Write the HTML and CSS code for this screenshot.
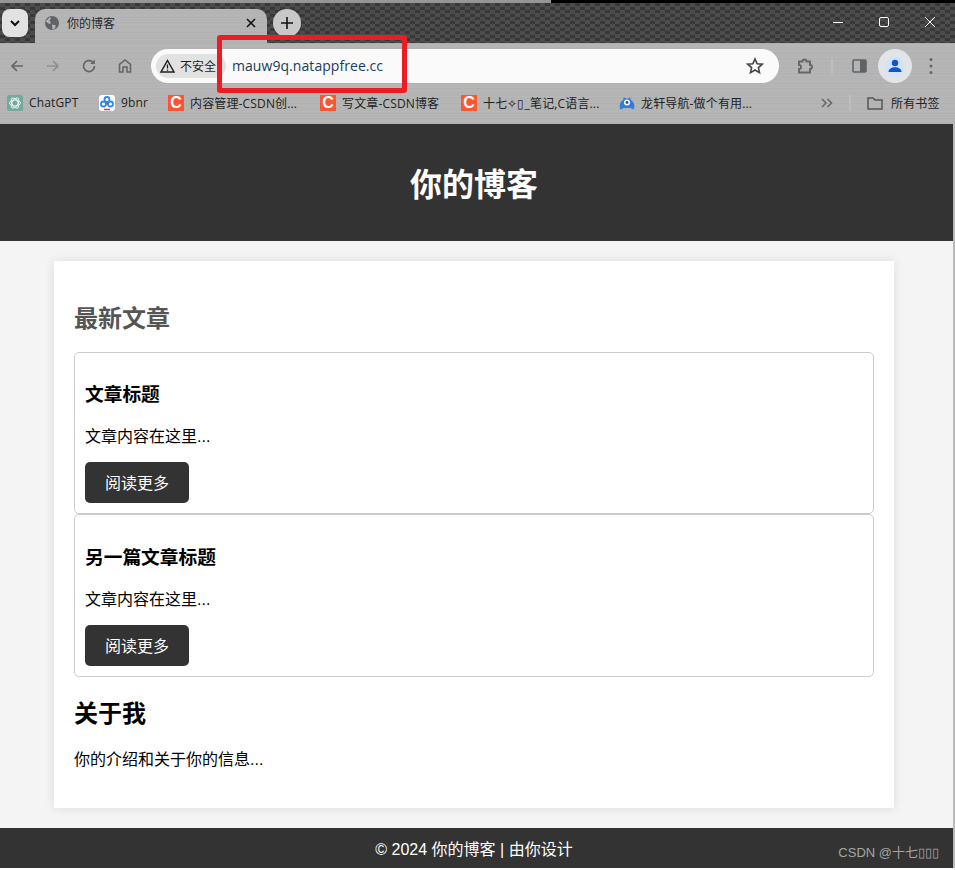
FILE: index.html
```html
<!DOCTYPE html>
<html lang="zh-CN">

<head>
    <meta charset="UTF-8">
    <meta name="viewport" content="width=device-width, initial-scale=1.0">
    <title>你的博客</title>
    <link rel="stylesheet" href="styles.css">
</head>

<body>
    <div id="browser">
        <div class="tabstrip">
            <div class="tab-list">
                <svg width="12" height="12" viewBox="0 0 12 12"><path d="M2 4l4 4 4-4" fill="none" stroke="#111" stroke-width="2"/></svg>
            </div>
            <div class="tab">
                <svg class="tab-globe" width="16" height="16" viewBox="0 0 16 16"><circle cx="8" cy="8" r="7" fill="#5f6368"/><path d="M1.500 6.500L6 2 7 3.500 5.500 5.500 7 8 5.500 9zM8 9.500l4 1-1.500 3.500-2 .5z" fill="#b4b4b4"/></svg>
                <span class="tab-title">你的博客</span>
                <svg class="tab-close" width="10" height="10" viewBox="0 0 10 10"><path d="M1 1l8 8M9 1l-8 8" stroke="#111" stroke-width="1.600"/></svg>
            </div>
            <div class="new-tab">
                <svg width="12" height="12" viewBox="0 0 12 12"><path d="M6 0v12M0 6h12" stroke="#111" stroke-width="1.600"/></svg>
            </div>
            <div class="window-btns">
                <svg width="12" height="12" viewBox="0 0 12 12"><path d="M1 6.500h10" stroke="#fff"/></svg>
                <svg width="12" height="12" viewBox="0 0 12 12"><rect x="1.500" y="1.500" width="9" height="9" rx="1.500" fill="none" stroke="#fff"/></svg>
                <svg width="12" height="12" viewBox="0 0 12 12"><path d="M1 1l10 10M11 1l-10 10" stroke="#fff"/></svg>
            </div>
        </div>

        <div class="toolbar">
            <div class="nav-btns">
                <svg width="16" height="16" viewBox="0 0 16 16"><path d="M14 8H3M8 3L3 8l5 5" fill="none" stroke="#666" stroke-width="1.700"/></svg>
                <svg width="16" height="16" viewBox="0 0 16 16"><path d="M2 8h11M8 3l5 5-5 5" fill="none" stroke="#8f8f8f" stroke-width="1.700"/></svg>
                <svg width="16" height="16" viewBox="0 0 16 16"><path d="M13.500 8A5.500 5.500 0 1 1 11.500 3.800" fill="none" stroke="#666" stroke-width="1.700"/><path d="M13.800 1.500v4.600H9.200z" fill="#666"/></svg>
                <svg width="16" height="16" viewBox="0 0 16 16"><path d="M2.500 14V6.500L8 2l5.500 4.500V14H10V9H6v5z" fill="none" stroke="#666" stroke-width="1.600"/></svg>
            </div>
            <div class="omnibox">
                <div class="chip">
                    <svg width="15" height="14" viewBox="0 0 15 14"><path d="M7.500 1.500L14 13H1z" fill="none" stroke="#222" stroke-width="1.500"/><path d="M7.500 5.500v4M7.500 10.500v1.300" stroke="#222" stroke-width="1.300"/></svg>
                    <span>不安全</span>
                </div>
                <span class="url">mauw9q.natappfree.cc</span>
                <svg class="star" width="18" height="18" viewBox="0 0 18 18"><path d="M9 2l2.100 4.700 5.100.5-3.800 3.400 1.100 5L9 13l-4.500 2.600 1.100-5L1.800 7.200l5.100-.5z" fill="none" stroke="#444" stroke-width="1.600"/></svg>
            </div>
            <div class="tool-btns">
                <svg class="puzzle" width="18" height="18" viewBox="0 0 18 18"><path d="M3 4.500h3.500a2 2 0 0 1 4 0H14V8a2 2 0 0 1 0 4v3.500H3V12a2 2 0 0 0 0-4z" fill="none" stroke="#666" stroke-width="1.900"/></svg>
                <span class="tool-divider"></span>
                <svg class="panel" width="15" height="14" viewBox="0 0 15 14"><rect x="1" y="1" width="13" height="12" rx="1" fill="none" stroke="#5f6368" stroke-width="1.600"/><rect x="8" y="1" width="6" height="12" fill="#5f6368"/></svg>
                <div class="avatar">
                    <div class="avatar-in">
                        <svg width="14" height="14" viewBox="0 0 14 14"><circle cx="7" cy="4" r="3.200" fill="#0b57d0"/><path d="M0.500 13c0-3 3-4.800 6.500-4.800s6.500 1.800 6.500 4.800z" fill="#0b57d0"/></svg>
                    </div>
                </div>
                <svg class="dots" width="4" height="16" viewBox="0 0 4 16"><circle cx="2" cy="1.500" r="1.500" fill="#666"/><circle cx="2" cy="8" r="1.500" fill="#666"/><circle cx="2" cy="14.500" r="1.500" fill="#666"/></svg>
            </div>
        </div>

        <div class="bookmarks">
            <div class="bm bm-gpt">
                <svg width="16" height="16" viewBox="0 0 16 16"><rect width="16" height="16" rx="2" fill="#74aa9c"/><g fill="none" stroke="#e8f3f0" stroke-width="1"><ellipse cx="8" cy="8" rx="5.500" ry="3"/><ellipse cx="8" cy="8" rx="5.500" ry="3" transform="rotate(60 8 8)"/><ellipse cx="8" cy="8" rx="5.500" ry="3" transform="rotate(120 8 8)"/></g></svg>
                <span>ChatGPT</span>
            </div>
            <div class="bm bm-9">
                <svg width="16" height="16" viewBox="0 0 16 16"><rect width="16" height="16" rx="3" fill="#fff"/><g fill="none" stroke-width="1.800"><circle cx="8" cy="4.500" r="2.500" stroke="#2a8cf0"/><circle cx="4.500" cy="9" r="2.500" stroke="#2a8cf0"/><circle cx="11.500" cy="9" r="2.500" stroke="#2a8cf0"/></g><path d="M6.500 8.500h3" stroke="#e8344e" stroke-width="1.500"/><path d="M5 14.500h6" stroke="#e8344e" stroke-width="1.500"/></svg>
                <span>9bnr</span>
            </div>
            <div class="bm bm-c1"><span class="c-icon">C</span><span>内容管理-CSDN创...</span></div>
            <div class="bm bm-c2"><span class="c-icon">C</span><span>写文章-CSDN博客</span></div>
            <div class="bm bm-c3"><span class="c-icon">C</span><span>十七✧▯_笔记,C语言...</span></div>
            <div class="bm bm-lx">
                <svg width="16" height="16" viewBox="0 0 16 16"><path d="M1 14c-1-4 0-7 3-9l1-3 1.500 1.500h3L11 2l1 3c3 2 4 5 3 9-2 1-3-1-3-1H4s-1 2-3 1z" fill="#2f7de1"/><circle cx="8" cy="7.500" r="3" fill="#fff"/><circle cx="8" cy="7.500" r="1.400" fill="#1b4fa8"/></svg>
                <span>龙轩导航-做个有用...</span>
            </div>
            <svg class="bm-more" width="12" height="10" viewBox="0 0 12 10"><path d="M1 1l4 4-4 4M6.500 1l4 4-4 4" fill="none" stroke="#666" stroke-width="1.500"/></svg>
            <span class="bm-divider"></span>
            <div class="bm bm-all">
                <svg width="16" height="14" viewBox="0 0 16 14"><path d="M1 2h5l2 2h7v9H1z" fill="none" stroke="#555" stroke-width="1.500"/></svg>
                <span>所有书签</span>
            </div>
        </div>

        <div class="red-mark"></div>
    </div>

    <div id="page">
        <header class="site-head">
            <h1>你的博客</h1>
        </header>

        <main class="site-main">
            <div class="container">
                <h2 class="latest">最新文章</h2>

                <article class="post">
                    <h3>文章标题</h3>
                    <p>文章内容在这里...</p>
                    <a class="btn-more">阅读更多</a>
                </article>

                <article class="post">
                    <h3>另一篇文章标题</h3>
                    <p>文章内容在这里...</p>
                    <a class="btn-more">阅读更多</a>
                </article>

                <h2 class="about">关于我</h2>
                <p class="about-text">你的介绍和关于你的信息...</p>
            </div>
        </main>

        <footer class="site-foot">
            <span>© 2024 你的博客 | 由你设计</span>
            <span class="watermark">CSDN @十七▯▯▯</span>
        </footer>
    </div>
</body>

</html>
```

FILE: styles.css
```css
*{
    margin:0;
    padding:0;
    box-sizing:border-box;
}
body{
    width:955px;
    height:870px;
    overflow:hidden;
    background-color:white;
    font-family:"Liberation Sans","Noto Sans CJK SC",sans-serif;
    font-size:16px;
    color:black;
}

/* browser chrome on top */
#browser{
    position:relative;
    height:124px;
    font-family:"Open Sans","Noto Sans CJK SC",sans-serif;
    background-color:rgb(180,180,180);
    background-image:
        repeating-linear-gradient(0deg, rgba(255,255,255,.04) 0 1px, transparent 1px 3px),
        repeating-linear-gradient(0deg, rgba(0,0,0,.02) 0 1px, transparent 1px 5px);
}
.tabstrip{
    height:43px;
    display:flex;
    align-items:flex-start;
    padding:6px 0 0 2px;
    background:repeating-conic-gradient(rgb(56,56,56) 0 25%, rgb(76,76,76) 0 50%) 0 0/10px 7px;
    border-top:3px solid black;
    position:relative;
}
.tabstrip::before{
    content:"";
    position:absolute;
    left:0;
    top:-3px;
    width:551px;
    height:3px;
    background-color:rgb(150,150,150);
}
.tab-list{
    width:26px;
    height:28px;
    border-radius:8px;
    background-color:rgb(226,226,226);
    display:flex;
    align-items:center;
    justify-content:center;
}
.tab{
    width:232px;
    height:34px;
    margin-left:7px;
    border-radius:10px 10px 0 0;
    display:flex;
    align-items:center;
    padding:0 11px 6px 9px;
    background-color:rgb(180,180,180);
    background-image:
        repeating-linear-gradient(0deg, rgba(255,255,255,.04) 0 1px, transparent 1px 3px),
        repeating-linear-gradient(0deg, rgba(0,0,0,.02) 0 1px, transparent 1px 5px);
}
.tab-title{
    margin-left:7px;
    font-size:12px;
    color:rgb(40,40,40);
    flex:1;
}
.new-tab{
    width:28px;
    height:28px;
    margin-left:6px;
    border-radius:50%;
    background-color:rgb(200,200,200);
    display:flex;
    align-items:center;
    justify-content:center;
}
.window-btns{
    margin-left:auto;
    width:123px;
    padding:7px 19px 0 0;
    display:flex;
    justify-content:space-between;
}

.toolbar{
    height:45px;
    display:flex;
    align-items:center;
}
.nav-btns{
    width:151px;
    padding:0 18px 0 9px;
    display:flex;
    justify-content:space-between;
}
.omnibox{
    width:628px;
    height:34px;
    border-radius:17px;
    background-color:rgb(250,250,250);
    display:flex;
    align-items:center;
    padding:0 15px 0 5px;
}
.chip{
    height:24px;
    width:70px;
    border-radius:12px;
    background-color:rgb(226,226,226);
    display:flex;
    align-items:center;
    padding-left:4px;
    font-size:12px;
    color:rgb(30,30,30);
}
.chip span{
    margin-left:5px;
}
.url{
    margin-left:6px;
    flex:1;
    font-size:14px;
    letter-spacing:.06px;
    color:rgb(32,60,90);
}
.tool-btns{
    flex:1;
    display:flex;
    align-items:center;
    padding-left:17px;
}
.tool-divider{
    width:2px;
    height:16px;
    margin-left:17px;
    background-color:rgb(190,190,190);
}
.panel{
    margin-left:19px;
}
.avatar{
    width:34px;
    height:34px;
    margin-left:11px;
    border-radius:50%;
    background-color:rgb(226,228,232);
    display:flex;
    align-items:center;
    justify-content:center;
}
.avatar-in{
    width:20px;
    height:20px;
    border-radius:50%;
    background-color:rgb(211,227,253);
    display:flex;
    align-items:center;
    justify-content:center;
}
.dots{
    margin-left:17px;
}

.bookmarks{
    height:36px;
    display:flex;
    align-items:center;
    padding:0 0 7px 7px;
    font-size:12px;
    letter-spacing:.15px;
    color:rgb(34,34,34);
}
.bm{
    display:flex;
    align-items:center;
    gap:6px;
    white-space:nowrap;
}
.bm-gpt{ width:92px; }
.bm-9{ width:69px; }
.bm-c1{ width:152px; }
.bm-c2{ width:141px; }
.bm-c3{ width:158px; }
.bm-lx{ width:202px; }
.c-icon{
    width:16px;
    height:16px;
    background-color:rgb(252,85,49);
    color:white;
    font-family:"Liberation Sans",sans-serif;
    font-size:16px;
    font-weight:bold;
    line-height:16px;
    text-align:center;
}
.bm-divider{
    width:2px;
    height:16px;
    margin:0 16px 0 16px;
    background-color:rgb(190,190,190);
}
.bm-all{
    gap:8px;
}

/* hand drawn mark around the address */
.red-mark{
    position:absolute;
    left:217px;
    top:35px;
    width:190px;
    height:58px;
    border:5px solid rgb(237,28,36);
    border-radius:3px;
}

/* the blog */
#page{
    width:955px;
    height:744px;
    background-color:rgb(244,244,244);
    border-right:2px solid rgb(185,185,185);
    position:relative;
}
.site-head{
    height:117px;
    padding:36px 5px 0 0;
    background-color:rgb(51,51,51);
    color:white;
    text-align:center;
}
.site-head h1{
    font-size:32px;
    line-height:50px;
}
.site-main{
    padding:20px 59px 20px 54px;
}
.container{
    width:840px;
    padding:20px;
    background-color:white;
    box-shadow:0 0 10px rgba(0,0,0,.1);
}
.container h2{
    margin:20px 0 16px;
    font-size:24px;
    line-height:35px;
}
.latest{
    color:rgb(85,85,85);
}
.container .about{
    margin-bottom:18px;
    line-height:33px;
}
.post{
    height:162px;
    padding:10px;
    border:1px solid rgb(204,204,204);
    border-radius:5px;
}
.post + .post{
    height:163px;
    padding-top:11px;
}
.post h3{
    margin:18px 0;
    font-size:18.72px;
    line-height:28px;
}
.post p{
    margin-bottom:16px;
    line-height:19px;
}
.about-text{
    margin-bottom:17px;
    line-height:23px;
}
.btn-more{
    display:block;
    width:104px;
    height:41px;
    border-radius:5px;
    background-color:rgb(51,51,51);
    color:white;
    line-height:43px;
    text-align:center;
}
.site-foot{
    height:40px;
    background-color:rgb(51,51,51);
    color:white;
    line-height:44px;
    padding-right:5px;
    text-align:center;
}
.watermark{
    position:absolute;
    right:14px;
    bottom:0;
    font-size:13px;
    line-height:30px;
    color:rgb(165,165,165);
}
```
